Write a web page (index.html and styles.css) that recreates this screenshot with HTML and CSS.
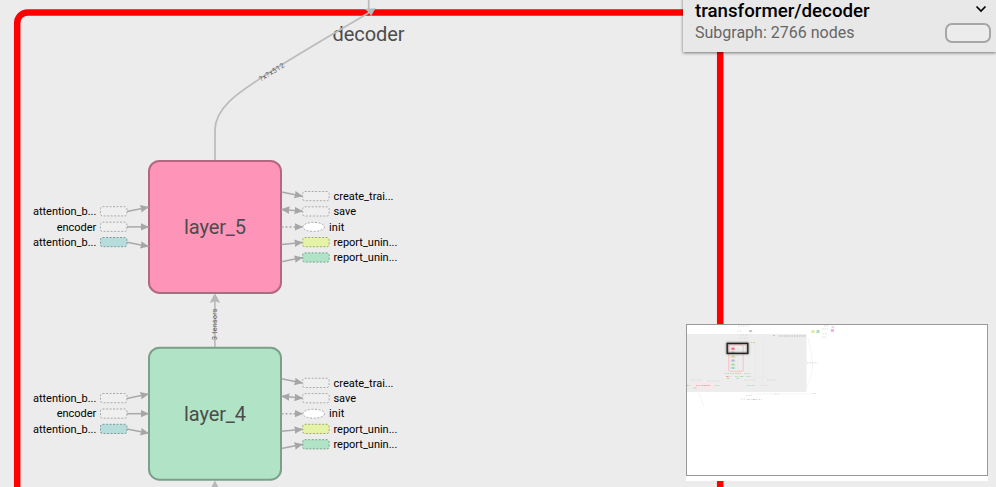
FILE: index.html
```html
<!DOCTYPE html>
<html lang="en">
<head>
<meta charset="utf-8">
<title>Graph</title>
<link rel="stylesheet" href="styles.css">
</head>
<body>
<main class="stage">
<svg class="graph" width="996" height="487" viewBox="0 0 996 487">
  <defs>
    <marker id="arrow" markerWidth="9" markerHeight="8" refX="8" refY="3.8" orient="auto-start-reverse" markerUnits="userSpaceOnUse">
      <path d="M0 0L8.500 3.800L0 7.600L.6 3.800Z" fill="#a6a6a6"/>
    </marker>
    <g id="annotations">
      <g class="edge">
        <path d="M127 211.6L148.500 207.200" marker-end="url(#arrow)"/>
        <path d="M127 226.900H148.500" marker-end="url(#arrow)"/>
        <path d="M127 242.200L148.500 246.400" marker-end="url(#arrow)"/>
        <path d="M281.500 192L302.500 196.200" marker-end="url(#arrow)"/>
        <path d="M281.500 209.400L302.500 211.300" marker-start="url(#arrow)" marker-end="url(#arrow)"/>
        <path class="control" d="M281.500 226.900H302.500" marker-end="url(#arrow)"/>
        <path d="M281.500 244.500L302.500 242.400" marker-end="url(#arrow)"/>
        <path d="M281.500 261.800L302.500 257.500" marker-end="url(#arrow)"/>
      </g>
      <g class="slot">
        <rect x="100.500" y="206.700" width="26.400" height="9.200" rx="2"/>
        <rect x="100.500" y="222.200" width="26.400" height="9.200" rx="2"/>
        <rect class="teal" x="100.500" y="237.500" width="26.400" height="9.200" rx="2"/>
        <rect x="302.700" y="191.500" width="26.400" height="9.200" rx="2"/>
        <rect x="302.700" y="206.800" width="26.400" height="9.200" rx="2"/>
        <ellipse class="white" cx="313.700" cy="226.900" rx="10.800" ry="4.500"/>
        <rect class="lime" x="302.700" y="237.500" width="26.400" height="9.200" rx="2"/>
        <rect class="green" x="302.700" y="252.900" width="26.400" height="9.200" rx="2"/>
      </g>
      <g class="label">
        <text x="33" y="215" textLength="63.300">attention_b...</text>
        <text x="56.800" y="230.600" textLength="39.400">encoder</text>
        <text x="33" y="246" textLength="63.300">attention_b...</text>
        <text x="333.500" y="200" textLength="60">create_trai...</text>
        <text x="333.500" y="215" textLength="22.500">save</text>
        <text x="329" y="230.600" textLength="15.300">init</text>
        <text x="333.500" y="246" textLength="63.800">report_unin...</text>
        <text x="333.500" y="261" textLength="63.800">report_unin...</text>
      </g>
    </g>
  </defs>

  <rect class="frame" x="17.200" y="12.400" width="703" height="520" rx="10.500"/>
  <text class="title" x="332.500" y="41" textLength="72">decoder</text>

  <g class="flow">
    <path d="M215 160V130C215 105 245 89 267 74C300 53 335 33 370 12"/>
    <path d="M368.700 0V12"/>
    <path d="M214.900 347V296"/>
  </g>
  <path class="head" d="M375.500 8.300L364.500 8.900L368.700 12L371 16.300Z"/>
  <path class="head" d="M214.900 293L220.200 303L214.900 301.300L209.600 303Z"/>
  <path class="head" d="M214.900 480.500L220.200 490.500L214.900 489L209.600 490.500Z"/>
  <text class="tensor" transform="translate(261 81.500) rotate(-32)" textLength="28">?x?x512</text>
  <text class="tensor" transform="translate(217 340) rotate(-90)" textLength="31.500">3 tensors</text>

  <rect class="node pink" x="149" y="160.900" width="132" height="132" rx="10.500"/>
  <rect class="node mint" x="149" y="347.700" width="132" height="132" rx="10.500"/>
  <text class="title" x="184" y="234" textLength="62">layer_5</text>
  <text class="title" x="184" y="421" textLength="62">layer_4</text>
  <use href="#annotations"/>
  <use href="#annotations" y="186.800"/>
</svg>

<aside class="info">
  <div class="heading">
    <h1>transformer/decoder</h1>
    <svg class="chevron" width="12" height="8" viewBox="0 0 12 8"><path d="M1.500 1.500L6 6L10.500 1.500"/></svg>
  </div>
  <div class="summary">
    <p>Subgraph: 2766 nodes</p>
    <span class="shape"></span>
  </div>
</aside>

<aside class="minimap">
  <svg width="300" height="150" viewBox="687 325 300 150">
    <rect x="687" y="334" width="119.500" height="58" fill="#ededed"/>
    <rect x="694" y="382" width="20" height="7" fill="#f8e7eb"/>
    <g class="trace">
      <path d="M699 393L704 407M755 338V382M763 338V383M806 363L813 362M808 338Q818 370 806 388M750 394H812M754 380Q764 373 770 381"/>
    </g>
    <g class="speckles">
      <path d="M737 331H742M738 326H749M750 332H753M740 335H748M739 338H748M824 326H829M831 327H834M822 329H828M830 330H834M823 334H827M822 337H827"/>
      <path d="M746 395.500H752M741 399H748M751 399.500H762M775 394H779M812 393.500H817M690 380H702M707 381H720M744 380H755M767 380H777M807 363H818"/>
      <path class="dark" d="M773 335.500H775M779 336H806"/>
      <path class="rose" d="M687 385.500H690M696 385.500H710M832 327H835"/>
      <path class="leaf" d="M725 373.500H734M744 373.500H750M702 385.500H708M715 385.500H720M747 385.500H755"/>
      <path class="sand" d="M735 373.500H741M748 399.500H750M753 399.500H756M751 342.500H755"/>
      <path d="M727 376.500H731M735 376.500H752M761 385.500H769M729.500 349H738M729.500 353H738M729.500 357H738M729.500 361H738M729.500 365H738M729.500 368H738"/>
    </g>
    <rect x="728.700" y="344.700" width="14.500" height="26.600" rx="1" fill="none" stroke="#f8c2c4"/>
    <rect x="749" y="330" width="3" height="2" fill="#ccc"/>
    <rect x="811.500" y="330" width="3" height="3" fill="#dcec9c"/><rect x="816.500" y="330" width="3" height="3" fill="#acdfc0"/>
    <rect x="831" y="329" width="3" height="3" fill="#edb6e4"/>
    <rect x="731.500" y="347.500" width="3" height="2.500" fill="#f56d9c"/>
    <rect x="731.500" y="351.500" width="3" height="2" fill="#8fd9aa"/>
    <rect x="731.500" y="355.500" width="3" height="2" fill="#dad08a"/>
    <rect x="731.500" y="359.500" width="3" height="2" fill="#a6b3d8"/>
    <rect x="731.500" y="363.500" width="3" height="2" fill="#a0df9c"/>
    <rect x="731.500" y="367" width="3" height="2" fill="#99d2ca"/>
    <rect x="726" y="376" width="2.500" height="1" fill="#f0a493"/><rect x="735" y="376" width="2" height="1" fill="#c5dfa2"/><rect x="740" y="376" width="2.500" height="1" fill="#a6dfac"/><rect x="747" y="376" width="2.500" height="1" fill="#b1e3b5"/>
    <rect x="727" y="378" width="2.500" height="1" fill="#a2dfb4"/><rect x="736.500" y="378" width="2.500" height="1" fill="#a6dcd3"/>
    <rect x="693.500" y="387.500" width="3" height="1" fill="#aedbc0"/>
    <rect class="viewport" x="727.200" y="343.400" width="20.600" height="10"/>
  </svg>
</aside>
</main>
</body>
</html>
```
FILE: styles.css
```css
* { box-sizing: border-box; }
body {
  margin: 0;
  overflow: hidden;
  background: #ececec;
  font-family: Roboto, sans-serif;
}
.stage { position: relative; width: 996px; height: 487px; overflow: hidden; }
.graph { display: block; }
.frame { fill: none; stroke: #f00; stroke-width: 6.500px; }
.title { font-size: 20px; fill: #4c4c4c; }
.flow path { fill: none; stroke: #bbb; stroke-width: 1.700px; }
.head { fill: #b8b8b8; }
.tensor { font-size: 7px; fill: #5c5c5c; }
.node { stroke-width: 2px; }
.pink { fill: #ff94b9; stroke: #b36782; }
.mint { fill: #b1e3c6; stroke: #7c9f8a; }
.edge path { fill: none; stroke: #a9a9a9; stroke-width: 1.500px; }
.edge .control { stroke-dasharray: 2 2; }
.slot > * { fill: #efefef; stroke: #aaa; stroke-width: 1px; stroke-dasharray: 2 1.500; }
.slot .teal { fill: #b6dcdb; stroke: #7f9a99; }
.slot .white { fill: #fff; }
.slot .lime { fill: #e4f3a6; stroke: #a0aa74; }
.slot .green { fill: #b1e3c6; stroke: #7c9f8a; }
.label { font-size: 11px; fill: #000; }

.info {
  position: absolute;
  top: -8px;
  right: 0;
  width: 313px;
  height: 60px;
  padding: 8px 5px 0 12px;
  background: #e8e8e8;
  box-shadow: 0 1px 3px rgba(0, 0, 0, .5);
}
.heading, .summary { display: flex; justify-content: space-between; }
.heading { height: 22px; padding-right: 4px; }
h1 { margin: 0; font-size: 18.700px; line-height: 22px; font-weight: 500; color: #000; }
.chevron { margin-top: 5px; }
.chevron path { fill: none; stroke: #000; stroke-width: 1.700px; }
.summary p { margin: 0; font-size: 16px; line-height: 22px; color: #666; }
.shape { width: 46px; height: 20px; margin-top: 1px; border: 2px solid #a6a6a6; border-radius: 7px; background: #ececec; }

.minimap {
  position: absolute;
  left: 686px;
  top: 324px;
  width: 302px;
  height: 157px;
  background: #fff;
}
.minimap svg { display: block; box-sizing: content-box; border: 1px solid #999; }
.trace path { fill: none; stroke: #e3e3e3; stroke-width: .4px; }
.speckles path { fill: none; stroke: #d6d6d6; stroke-width: .8px; stroke-dasharray: 1.500 1; }
.speckles .dark { stroke: #aaa; }
.speckles .rose { stroke: #e99bac; }
.speckles .leaf { stroke: #a7d6b2; }
.speckles .sand { stroke: #cbb88d; }
.viewport { fill: none; stroke: #222; stroke-width: 1.400px; filter: drop-shadow(0 0 1px rgba(0, 0, 0, .6)); }
```
